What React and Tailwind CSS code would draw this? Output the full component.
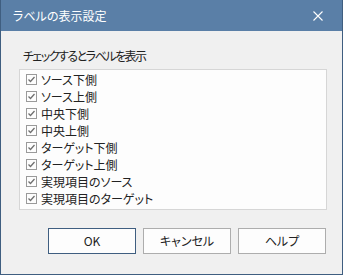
import React from 'react';

const items = [
    'ソース下側',
    'ソース上側',
    '中央下側',
    '中央上側',
    'ターゲット下側',
    'ターゲット上側',
    '実現項目のソース',
    '実現項目のターゲット',
];

function Check() {
    return (
        <span className="w-[11px] h-[11px] border border-[#9a9a9a] bg-[#fdfdfd] flex items-center justify-center shrink-0">
            <svg width="9" height="9" viewBox="0 0 9 9">
                <path d="M1.5 4.5 L3.5 6.5 L7.5 2" fill="none" stroke="#6f6f6f" strokeWidth="1.3" />
            </svg>
        </span>
    );
}

export default function App() {
    return (
        <div
            className="w-[343px] h-[275px] bg-[#f0f0f0] border-x border-b border-[#3f5e80] flex flex-col text-[12px] text-[#222] [font-feature-settings:'palt']"
            style={{ fontFamily: '"Noto Sans CJK JP", "Noto Sans", sans-serif' }}
        >
            <div className="h-[31px] bg-[#5a7fa7] flex items-center justify-between pl-[12px] pr-[19px] shrink-0">
                <span className="text-white text-[12px] leading-none">ラベルの表示設定</span>
                <svg width="10" height="10" viewBox="0 0 10 10">
                    <path d="M0.5 0.5 L9.5 9.5 M9.5 0.5 L0.5 9.5" stroke="#ffffff" strokeWidth="1.1" />
                </svg>
            </div>
            <div className="pl-[18px] pr-[15px]">
                <div className="mt-[16px] h-[17px] leading-[17px] pl-[4px] tracking-[-1.5px]">チェックするとラベルを表示</div>
                <div className="mt-[5px] h-[141px] border border-[#d6d6d6] bg-[#fdfdfd] pt-[1px] pl-[6px]">
                    {items.map((t) => (
                        <div key={t} className="h-[17px] flex items-center gap-[4px]">
                            <Check />
                            <span className="leading-none">{t}</span>
                        </div>
                    ))}
                </div>
                <div className="mt-[18px] flex justify-end gap-[7px] pr-[1px]">
                    <button className="w-[88px] h-[26px] border border-[#3f5e80] bg-[#fdfdfd]">OK</button>
                    <button className="w-[88px] h-[26px] border border-[#adadad] bg-[#fdfdfd]">キャンセル</button>
                    <button className="w-[88px] h-[26px] border border-[#adadad] bg-[#fdfdfd]">ヘルプ</button>
                </div>
            </div>
        </div>
    );
}
